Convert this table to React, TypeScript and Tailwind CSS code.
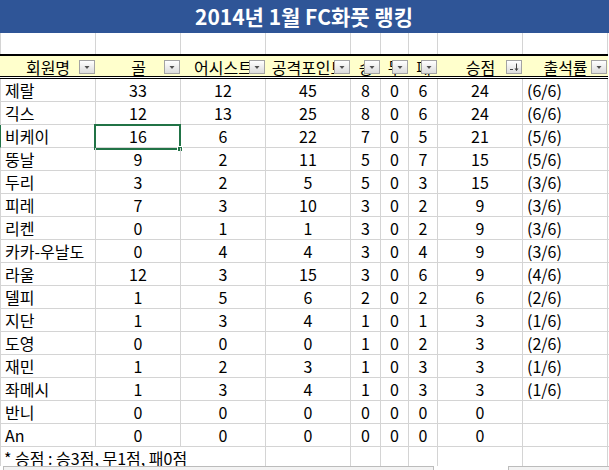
import React from 'react';

const widths = [
  'w-[95px]',
  'w-[85px]',
  'w-[85px]',
  'w-[85px]',
  'w-[30px]',
  'w-[28px]',
  'w-[29px]',
  'w-[85px]',
  'w-[85px]',
];

const headers = ['회원명', '골', '어시스트', '공격포인트', '승', '무', '패', '승점', '출석률'];

const rows: (string | number)[][] = [
  ['제랄', 33, 12, 45, 8, 0, 6, 24, '(6/6)'],
  ['긱스', 12, 13, 25, 8, 0, 6, 24, '(6/6)'],
  ['비케이', 16, 6, 22, 7, 0, 5, 21, '(5/6)'],
  ['뚱날', 9, 2, 11, 5, 0, 7, 15, '(5/6)'],
  ['두리', 3, 2, 5, 5, 0, 3, 15, '(3/6)'],
  ['피레', 7, 3, 10, 3, 0, 2, 9, '(3/6)'],
  ['리켄', 0, 1, 1, 3, 0, 2, 9, '(3/6)'],
  ['카카-우날도', 0, 4, 4, 3, 0, 4, 9, '(3/6)'],
  ['라울', 12, 3, 15, 3, 0, 6, 9, '(4/6)'],
  ['델피', 1, 5, 6, 2, 0, 2, 6, '(2/6)'],
  ['지단', 1, 3, 4, 1, 0, 1, 3, '(1/6)'],
  ['도영', 0, 0, 0, 1, 0, 2, 3, '(2/6)'],
  ['재민', 1, 2, 3, 1, 0, 3, 3, '(1/6)'],
  ['좌메시', 1, 3, 4, 1, 0, 3, 3, '(1/6)'],
  ['반니', 0, 0, 0, 0, 0, 0, 0, ''],
  ['An', 0, 0, 0, 0, 0, 0, 0, ''],
];

const FilterButton = ({ sorted }: { sorted?: boolean }) => (
  <span className="absolute right-[1px] top-[4px] h-[14px] w-[16px] border border-[#a3a3a3] bg-gradient-to-b from-white to-[#dcdcdc]">
    <svg width="14" height="12" viewBox="0 0 14 12" className="block">
      {sorted ? (
        <>
          <path d="M3 8.5h3" stroke="#404040" strokeWidth="1" />
          <path d="M9.5 2.5v7" stroke="#404040" strokeWidth="1" />
          <path d="M7.5 7.5l2 2.5 2-2.5z" fill="#404040" />
        </>
      ) : (
        <path d="M4.5 5h5l-2.5 3z" fill="#505050" />
      )}
    </svg>
  </span>
);

const App = () => {
  return (
    <div className="w-[609px] h-[470px] overflow-hidden bg-white text-black font-['Noto_Sans_CJK_KR','Malgun_Gothic',sans-serif] text-[16px]">
      {/* title */}
      <div className="h-[33px] bg-[#2f5597] flex items-center">
        <p className="w-[608px] text-center text-white font-bold text-[21px] leading-[33px]">
          2014년 1월 FC화풋 랭킹
        </p>
      </div>

      {/* blank row */}
      <div className="flex h-[21px] border-l border-[#d4d4d4]">
        {widths.map((w, i) => (
          <div key={i} className={`${w} h-full border-r border-[#d4d4d4]`} />
        ))}
      </div>

      {/* header */}
      <div className="w-[608px]">
        <div className="h-[2px] bg-black" />
        <div className="flex h-[20px] bg-[#ffffcc]">
          {headers.map((h, i) => (
            <div
              key={h}
              className={`${widths[i]} ${i === 0 ? 'w-[96px]' : ''} relative h-full overflow-hidden whitespace-nowrap flex justify-center leading-[22px]`}
            >
              <span>{h}</span>
              <FilterButton sorted={i === 7} />
            </div>
          ))}
        </div>
        <div className="h-[3px] border-y border-black bg-white" />
      </div>

      {/* data */}
      {rows.map((r, ri) => (
        <div
          key={ri}
          className={`flex h-[23px] border-b border-l border-b-[#d4d4d4] ${ri === 2 ? 'border-l-[#217346]' : 'border-l-[#d4d4d4]'}`}
        >
          {r.map((v, ci) => (
            <div
              key={ci}
              className={`${widths[ci]} relative h-full border-r border-[#d4d4d4] leading-[22px] whitespace-nowrap ${
                ci === 0 || ci === 8 ? 'text-left pl-[4px]' : 'text-center'
              }`}
            >
              {v}
              {ri === 2 && ci === 1 && (
                <span className="absolute -left-[2px] -top-[1px] -right-[1px] -bottom-[3px] border-2 border-[#217346]">
                  <span className="absolute -right-[4px] -bottom-[4px] h-[6px] w-[6px] bg-[#217346] border border-white" />
                </span>
              )}
            </div>
          ))}
        </div>
      ))}

      {/* note */}
      <div className="flex h-[19px] border-l border-[#d4d4d4] overflow-hidden">
        <div className="w-[265px] h-full border-r border-[#d4d4d4] pl-[3px] leading-[22px] whitespace-nowrap">
          * 승점 : 승3점, 무1점, 패0점
        </div>
        {widths.slice(3).map((w, i) => (
          <div key={i} className={`${w} h-full border-r border-[#d4d4d4]`} />
        ))}
      </div>

      {/* bottom strip */}
      <div className="flex h-[4px]">
        <div className="w-[3px]" />
        <div className="w-[431px] border-t border-x border-[#bcbcbc] bg-[#f3f3f3]" />
        <div className="w-[74px]" />
        <div className="flex-1 border-t border-l border-[#bcbcbc] bg-[#f3f3f3]" />
      </div>
    </div>
  );
};

export default App;
